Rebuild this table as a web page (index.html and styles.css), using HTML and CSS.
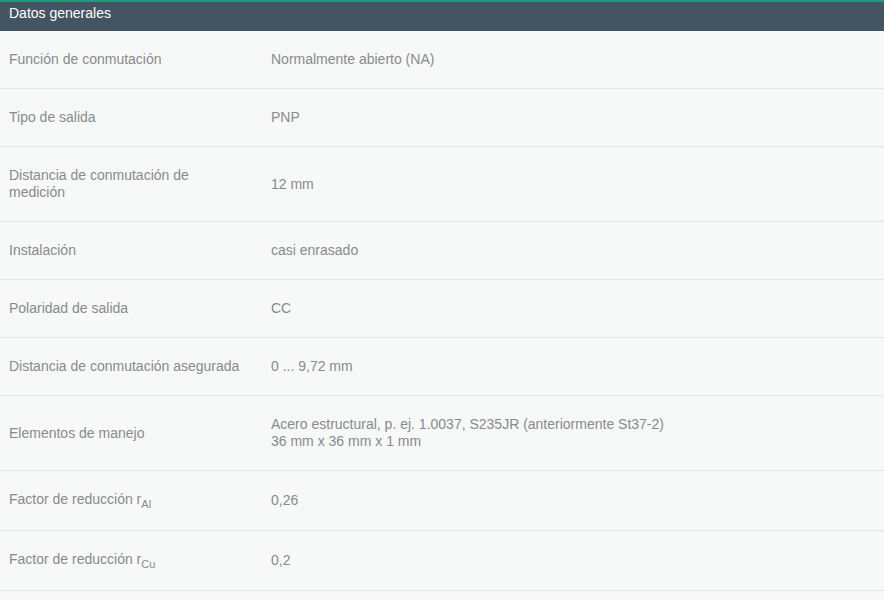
FILE: index.html
```html
<!DOCTYPE html>
<html lang="es">
<head>
    <meta charset="UTF-8">
    <meta name="viewport" content="width=device-width, initial-scale=1.0">
    <title>Datos generales</title>
    <link rel="stylesheet" href="styles.css">
</head>
<body>
    <div class="panel">
        <h2 class="panel-title">Datos generales</h2>

        <div class="spec-list">
            <div class="spec-row">
                <div class="spec-label">Función de conmutación</div>
                <div class="spec-value">Normalmente abierto (NA)</div>
            </div>
            <div class="spec-row">
                <div class="spec-label">Tipo de salida</div>
                <div class="spec-value">PNP</div>
            </div>
            <div class="spec-row">
                <div class="spec-label">Distancia de conmutación de medición</div>
                <div class="spec-value">12 mm</div>
            </div>
            <div class="spec-row">
                <div class="spec-label">Instalación</div>
                <div class="spec-value">casi enrasado</div>
            </div>
            <div class="spec-row">
                <div class="spec-label">Polaridad de salida</div>
                <div class="spec-value">CC</div>
            </div>
            <div class="spec-row">
                <div class="spec-label">Distancia de conmutación asegurada</div>
                <div class="spec-value">0 ... 9,72 mm</div>
            </div>
            <div class="spec-row">
                <div class="spec-label">Elementos de manejo</div>
                <div class="spec-value">Acero estructural, p. ej. 1.0037, S235JR (anteriormente St37-2)<br>36 mm x 36 mm x 1 mm</div>
            </div>
            <div class="spec-row">
                <div class="spec-label">Factor de reducción r<sub>Al</sub></div>
                <div class="spec-value">0,26</div>
            </div>
            <div class="spec-row">
                <div class="spec-label">Factor de reducción r<sub>Cu</sub></div>
                <div class="spec-value">0,2</div>
            </div>
        </div>
    </div>
</body>
</html>
```

FILE: styles.css
```css
/* base */
body {
    margin: 0;
    font-family: 'Liberation Sans', Arial, sans-serif;
    font-size: 14px;
    line-height: 17px;
    color: #888b8d;
    background-color: #f7f8f8;
}

/* header bar */
.panel-title {
    margin: 0;
    padding: 3px 9px 9px;
    font-size: 14px;
    font-weight: normal;
    line-height: 17px;
    color: #ffffff;
    background-color: #435563;
    border-top: 2px solid #17a07c;
}

/* rows */
.spec-row {
    display: grid;
    grid-template-columns: 271px 1fr;
    align-items: center;
    padding: 20px 0;
    border-bottom: 1px solid #e4e7e7;
}
.spec-label {
    padding: 0 29px 0 9px;
}
.spec-value {
    padding-right: 9px;
}

/* subíndices r_Al, r_Cu */
sub {
    font-size: 11px;
    line-height: 1;
    vertical-align: -4px;
}
```
